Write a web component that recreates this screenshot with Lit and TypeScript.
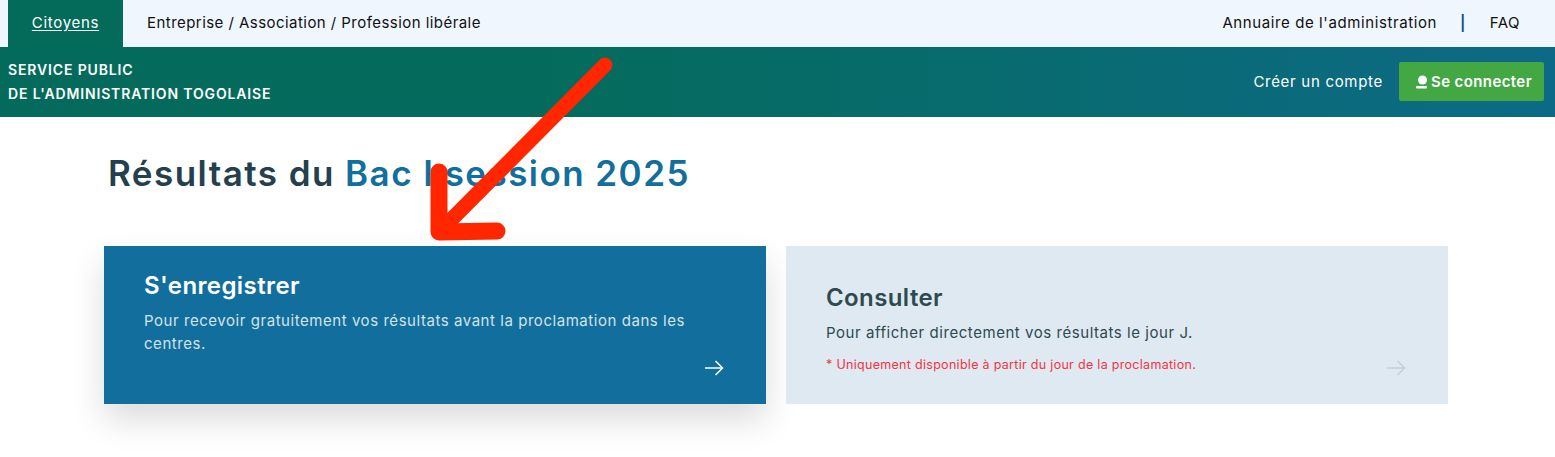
import { LitElement, html, css } from 'lit';
import { customElement } from 'lit/decorators.js';

@customElement('app-root')
export class AppRoot extends LitElement {
    static override styles = css`
    :host {
      display: block;
      position: relative;
      height: 457px;
      overflow: hidden;
      background: #fff;
      font-family: Inter, "Liberation Sans", sans-serif;
      color: #111;
    }
    a { color: inherit; text-decoration: none; }

    /* top strip */
    .top {
      display: flex;
      justify-content: space-between;
      align-items: stretch;
      height: 47px;
      padding: 0 35px 0 8px;
      background: #eff6fd;
      font-size: 15px;
      letter-spacing: 0.45px;
    }
    .top-left, .top-right { display: flex; align-items: center; }
    .top-left a, .top-right > * { padding-bottom: 2px; }
    .tab {
      display: flex;
      align-items: center;
      justify-content: center;
      box-sizing: border-box;
      width: 115px;
      height: 100%;
      background: #046b5a;
      color: #fff;
      letter-spacing: 0.7px;
      text-decoration: underline;
      text-underline-offset: 2px;
    }
    .sectors { margin-left: 24px; white-space: pre; }
    .directory { letter-spacing: 0.6px; }
    .sep { margin: 0 24px 0 23px; font-weight: 600; color: #0a4a86; }

    /* brand bar */
    .bar {
      display: flex;
      justify-content: space-between;
      align-items: center;
      height: 70px;
      padding: 0 11px 0 8px;
      background: linear-gradient(90deg, #046b5c 0%, #046b5c 35%, #0d6a86 100%);
      color: #fff;
    }
    .brand {
      font-size: 14px;
      font-weight: 600;
      line-height: 24px;
      letter-spacing: 0.85px;
    }
    .account {
      display: flex;
      align-items: center;
      gap: 16px;
      margin-bottom: 1px;
      font-size: 15px;
      letter-spacing: 0.7px;
    }
    .login {
      display: flex;
      align-items: center;
      gap: 3px;
      height: 39px;
      padding: 0 12px 0 17px;
      box-sizing: border-box;
      border-radius: 2px;
      background: #43a844;
      font-weight: 600;
      letter-spacing: 0.4px;
    }

    /* content */
    main { padding: 0 107px 0 104px; }
    h1 {
      margin: 0;
      padding: 34px 0 0 4px;
      height: 95px;
      box-sizing: border-box;
      font-size: 35px;
      line-height: 45px;
      font-weight: 600;
      letter-spacing: 1.45px;
      color: #24404f;
    }
    h1 span { color: #126e9c; }
    .cards {
      display: grid;
      grid-template-columns: 1fr 1fr;
      gap: 20px;
      margin-top: 34px;
    }
    .card {
      position: relative;
      height: 158px;
      box-sizing: border-box;
      padding: 24px 40px 0;
    }
    .card h2 {
      margin: 0 0 7px;
      font-size: 24px;
      line-height: 32px;
      font-weight: 600;
      letter-spacing: 0.4px;
    }
    .card p {
      margin: 0;
      font-size: 15px;
      line-height: 23px;
      letter-spacing: 0.55px;
    }
    .primary {
      background: #126e9c;
      color: #fff;
      box-shadow: 0 16px 32px rgba(0, 0, 0, 0.14);
    }
    .primary p { color: #d3e3ec; }
    .secondary {
      background: #dfe9f2;
      color: #2e4a4f;
      padding-top: 36px;
    }
    .note {
      margin-top: 12px;
      font-size: 12.5px;
      line-height: 18px;
      letter-spacing: 0.3px;
      color: #f5343f;
    }
    .go {
      position: absolute;
      right: 42px;
      bottom: 27px;
      width: 20px;
      height: 18px;
      fill: none;
      stroke: #fff;
      stroke-width: 1.5;
    }
    .secondary .go { stroke: #c3ced8; }

    .pointer {
      position: absolute;
      left: 0;
      top: 0;
      pointer-events: none;
    }
  `;

    override render() {
        return html`
      <div class="top">
        <div class="top-left">
          <a class="tab" href="#">Citoyens</a>
          <a class="sectors" href="#">Entreprise / Association / Profession libérale</a>
        </div>
        <div class="top-right">
          <a class="directory" href="#">Annuaire de l'administration</a>
          <span class="sep">|</span>
          <a href="#">FAQ</a>
        </div>
      </div>
      <div class="bar">
        <div class="brand">SERVICE PUBLIC<br />DE L'ADMINISTRATION TOGOLAISE</div>
        <div class="account">
          <a href="#">Créer un compte</a>
          <a class="login" href="#">
            <svg width="12" height="15" viewBox="0 0 12 15" fill="#fff">
              <circle cx="6.5" cy="6" r="4.5"></circle>
              <rect x="0" y="12" width="11" height="2.5" rx="1"></rect>
            </svg>
            Se connecter
          </a>
        </div>
      </div>
      <main>
        <h1>Résultats du <span>Bac I session 2025</span></h1>
        <div class="cards">
          <div class="card primary">
            <h2>S'enregistrer</h2>
            <p>Pour recevoir gratuitement vos résultats avant la proclamation dans les centres.</p>
            ${this.renderArrow()}
          </div>
          <div class="card secondary">
            <h2>Consulter</h2>
            <p>Pour afficher directement vos résultats le jour J.</p>
            <div class="note">* Uniquement disponible à partir du jour de la proclamation.</div>
            ${this.renderArrow()}
          </div>
        </div>
      </main>
      <svg class="pointer" width="1555" height="457" viewBox="0 0 1555 457" fill="none"
        stroke="#ff2600" stroke-linecap="round" stroke-linejoin="round">
        <path d="M605 65 L439 232" stroke-width="15"></path>
        <path d="M439 172 L439 232 L497 231" stroke-width="17"></path>
      </svg>
    `;
    }

    private renderArrow() {
        return html`
      <svg class="go" viewBox="0 0 20 18">
        <path d="M1 9 H18.5 M11.5 2 L18.5 9 L11.5 16"></path>
      </svg>
    `;
    }
}

export { };
